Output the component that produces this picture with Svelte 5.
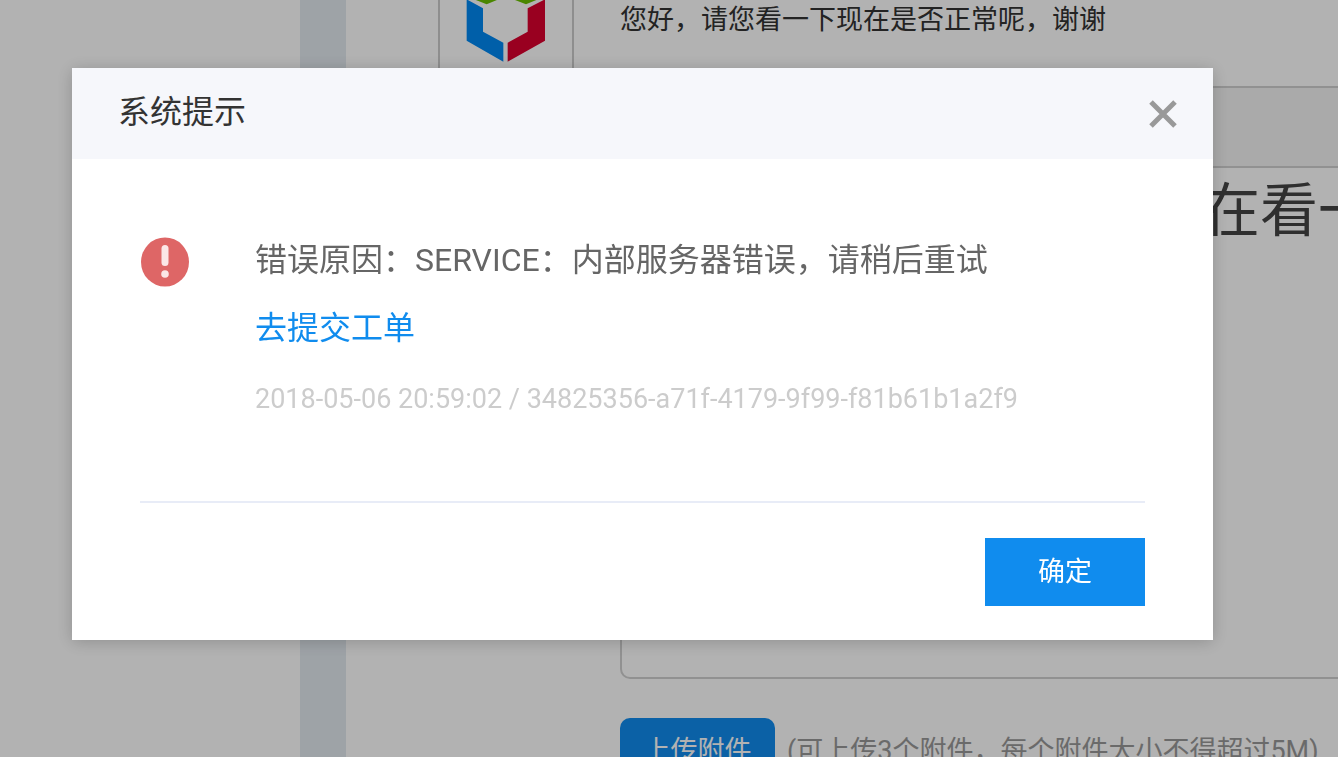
<script>
  let open = $state(true);
  let draft = $state('在看一');
  const close = () => (open = false);
</script>

<div class="page">
  <aside class="sidebar"></aside>
  <div class="gutter"></div>
  <main class="main">
    <article class="reply">
      <div class="avatar">
        <svg viewBox="60 -174 396 396" aria-hidden="true">
          <path fill="#0088f3" d="M140-2 189 25V95L250 128V185L140 122Z" />
          <path fill="#db002e" d="M375-2 323 25V95L263 128V185L375 122Z" />
          <path fill="#6ac100" d="M130-15 257-85 385-15 318 13 257-11 200 13Z" />
        </svg>
      </div>
      <p class="reply-text">您好，请您看一下现在是否正常呢，谢谢</p>
    </article>

    <section class="compose">
      <div class="editor">
        <div class="toolbar"></div>
        <textarea aria-label="回复" bind:value={draft} wrap="off"></textarea>
      </div>
      <div class="attach">
        <button class="upload" type="button">上传附件</button>
        <span class="hint">(可上传3个附件，每个附件大小不得超过5M)</span>
      </div>
    </section>
  </main>
</div>

{#if open}
  <div class="backdrop">
    <div class="dialog" role="alertdialog" aria-modal="true" aria-labelledby="dialog-title">
      <header class="dialog-head">
        <h2 id="dialog-title">系统提示</h2>
        <button class="close" type="button" aria-label="关闭" onclick={close}>
          <svg viewBox="0 0 28 28" aria-hidden="true">
            <path d="M2 2 26 26M26 2 2 26" fill="none" stroke="#999" stroke-width="5" />
          </svg>
        </button>
      </header>
      <div class="dialog-body">
        <div class="notice">
          <svg class="alert" viewBox="0 0 50 50" aria-hidden="true">
            <ellipse cx="25" cy="25" rx="24" ry="24.5" fill="#de6666" />
            <rect x="21.5" y="8" width="7" height="21" rx="3.5" fill="#fbe6e6" />
            <circle cx="25" cy="37" r="3.8" fill="#fbe6e6" />
          </svg>
          <div class="details">
            <p class="message">错误原因：SERVICE：内部服务器错误，请稍后重试</p>
            <p class="message"><a href="#ticket">去提交工单</a></p>
            <p class="meta">2018-05-06 20:59:02 / 34825356-a71f-4179-9f99-f81b61b1a2f9</p>
          </div>
        </div>
        <footer class="dialog-foot">
          <button class="confirm" type="button" onclick={close}>确定</button>
        </footer>
      </div>
    </div>
  </div>
{/if}

<style>
  :global(body) {
    overflow: hidden;
    background: #fff;
    color: #333;
    font-family: Roboto, 'Noto Sans CJK SC', sans-serif;
  }

  :global(*) {
    box-sizing: border-box;
  }

  p,
  h2 {
    margin: 0;
    font-weight: 400;
  }

  button,
  textarea {
    font-family: inherit;
    border: 0;
    padding: 0;
  }

  button {
    cursor: pointer;
  }

  .page {
    display: flex;
    min-height: calc(100vh + 60px);
    margin-top: -60px;
  }

  .sidebar {
    flex: 0 0 300px;
  }

  .gutter {
    flex: 0 0 46px;
    background: #e3eaf0;
  }

  .main {
    flex: 1;
    min-width: 0;
    padding-left: 92px;
  }

  .reply {
    display: flex;
    gap: 46px;
    min-height: 146px;
  }

  .avatar {
    flex: none;
    width: 136px;
    height: 136px;
    border: 2px solid #ccc;
  }

  .avatar svg {
    display: block;
    width: 100%;
  }

  .reply-text {
    padding-top: 60px;
    font-size: 27px;
    line-height: 40px;
    white-space: nowrap;
  }

  .compose {
    padding-left: 182px;
  }

  .editor {
    margin-right: -40px;
    border: 2px solid #d0d0d0;
    border-radius: 10px;
  }

  .toolbar {
    height: 80px;
    background: #f4f4f4;
    border-bottom: 2px solid #d0d0d0;
  }

  textarea {
    display: block;
    width: 100%;
    height: 509px;
    padding-left: 580px;
    resize: none;
    overflow: hidden;
    outline: 0;
    background: none;
    border-radius: 10px;
    color: #444;
    font-size: 58px;
    line-height: 86px;
    white-space: pre;
  }

  .attach {
    display: flex;
    align-items: center;
    gap: 12px;
    margin-top: 39px;
    font-size: 27px;
    line-height: 40px;
    white-space: nowrap;
  }

  .upload {
    flex: none;
    width: 155px;
    height: 66px;
    padding-bottom: 6px;
    border-radius: 10px;
    background: #108cee;
    color: #fff;
    font-size: 27px;
  }

  .hint {
    color: #999;
  }

  .backdrop {
    position: fixed;
    inset: 0;
    padding: 68px 125px 68px 72px;
    background: rgba(0, 0, 0, 0.3);
  }

  .dialog {
    background: #fff;
    box-shadow: 0 2px 16px rgba(0, 0, 0, 0.2);
  }

  .dialog-head {
    display: flex;
    align-items: center;
    justify-content: space-between;
    height: 91px;
    padding: 0 36px 0 46px;
    background: #f6f7fb;
  }

  h2 {
    padding-bottom: 4px;
    font-size: 32px;
    line-height: 48px;
  }

  .close {
    width: 28px;
    height: 28px;
    background: none;
  }

  .close svg {
    display: block;
  }

  .dialog-body {
    padding: 67px 68px 34px;
  }

  .notice {
    display: flex;
    gap: 65px;
    padding-bottom: 65px;
    border-bottom: 2px solid #e8ecf7;
  }

  .alert {
    flex: none;
    width: 50px;
    height: 50px;
    margin-top: 11px;
  }

  .message {
    color: #666;
    font-size: 32px;
    line-height: 68px;
  }

  .message a {
    color: #108cee;
    text-decoration: none;
  }

  .meta {
    color: #ccc;
    font-size: 27px;
    line-height: 74px;
  }

  .dialog-foot {
    display: flex;
    justify-content: flex-end;
    padding-top: 35px;
  }

  .confirm {
    width: 160px;
    height: 68px;
    padding-bottom: 6px;
    background: #108cee;
    color: #fff;
    font-size: 27px;
  }
</style>
